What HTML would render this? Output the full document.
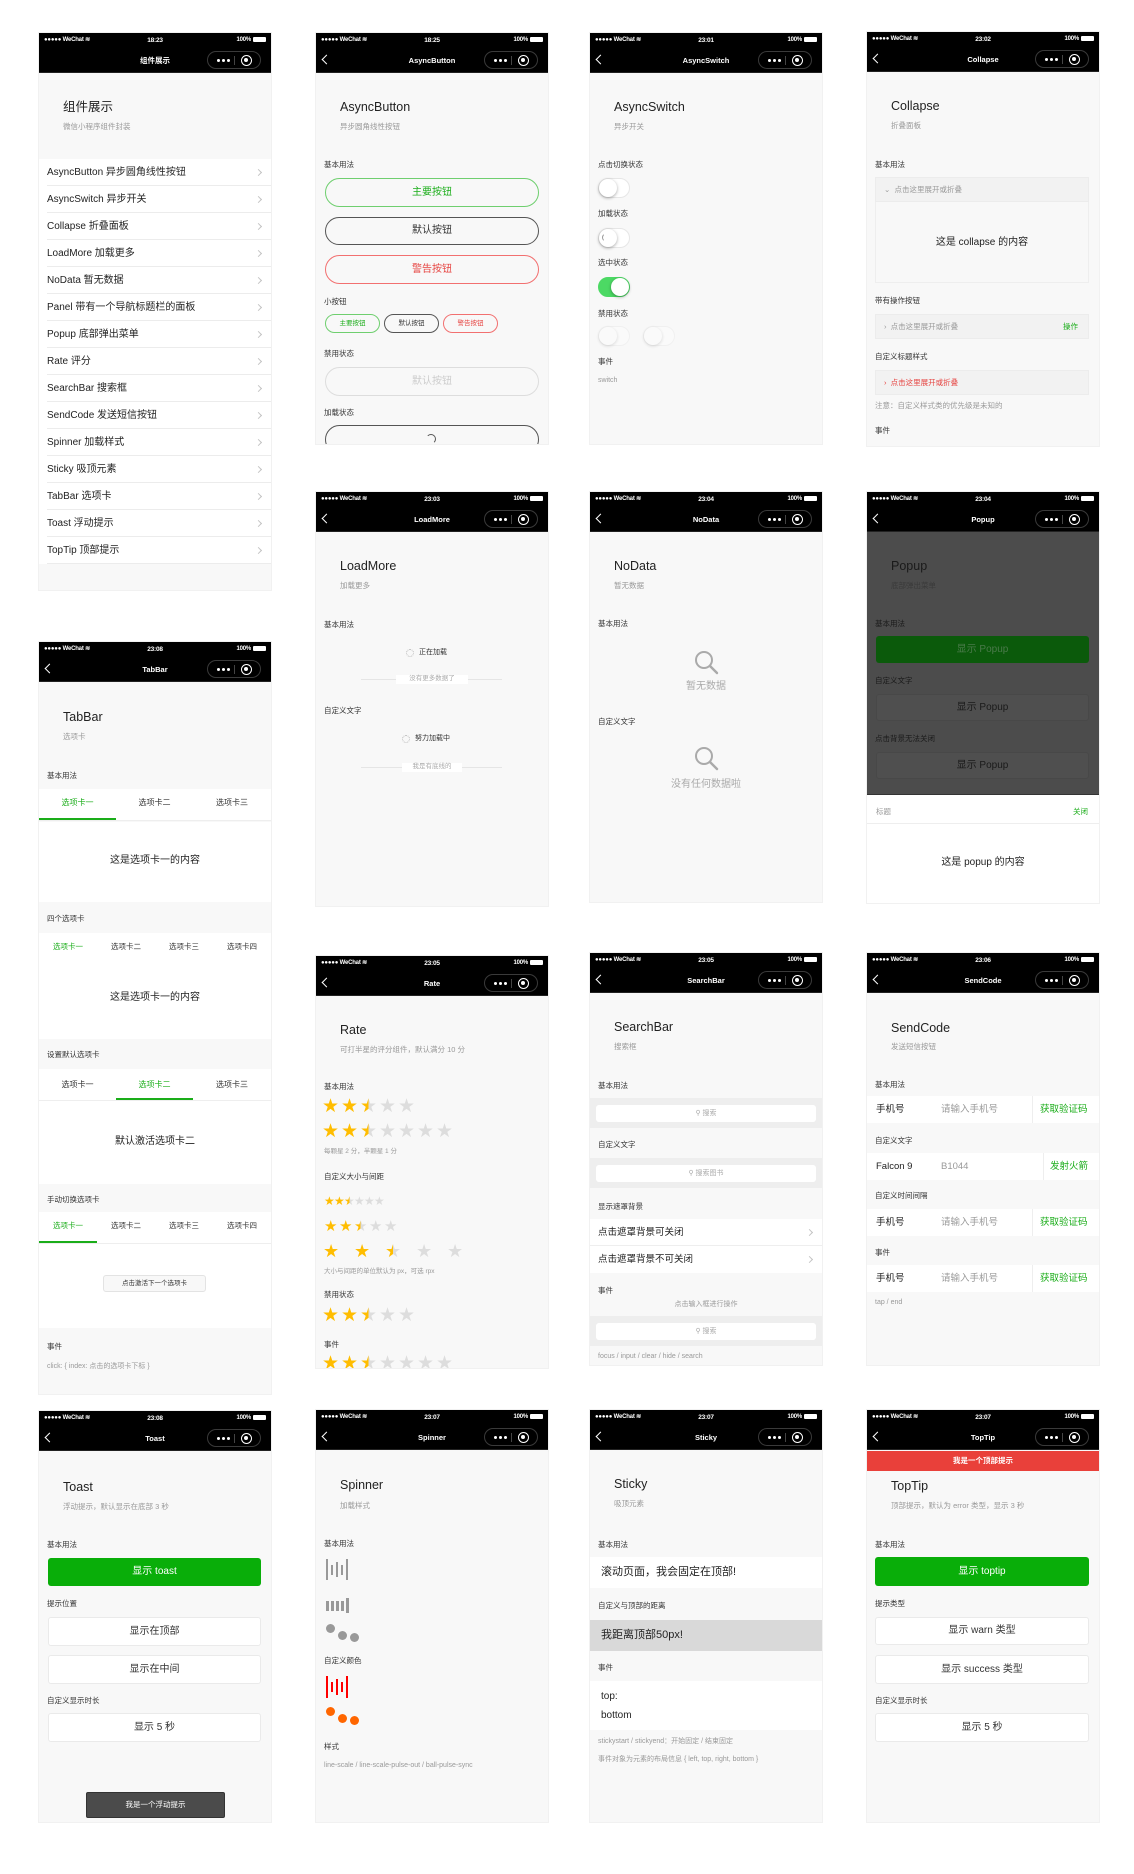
<!DOCTYPE html>
<html><head><meta charset="utf-8"><style>
*{margin:0;padding:0;box-sizing:border-box}
body{width:1134px;height:1874px;background:#fff;position:relative;overflow:hidden;font-family:"Liberation Sans","Noto Sans CJK SC",sans-serif;color:#222}
.p{position:absolute;width:232px;background:#f8f8f8;overflow:hidden;box-shadow:0 0 0 1px #f1f1f1}
.a{position:absolute;white-space:nowrap;line-height:1}
.hd{position:absolute;left:0;top:0;width:100%;height:40px;background:#000;color:#fff;border-bottom:1px solid #222}
.sb{position:absolute;top:4px;font:bold 6px/7px "Liberation Sans",sans-serif;letter-spacing:-.2px}
.sl{left:5px}.sc{left:0;right:0;text-align:center;font-size:6.5px}.sr{right:5px}
.bat{display:inline-block;width:13px;height:5px;background:#fff;border-radius:1px;vertical-align:-1px;margin-left:2px}
.bk{position:absolute;left:7px;top:23px;width:7px;height:7px;border-left:1.6px solid #fff;border-bottom:1.6px solid #fff;transform:rotate(45deg)}
.nt{position:absolute;top:23px;left:0;right:0;text-align:center;font:bold 7.5px/9px "Liberation Sans","Noto Sans CJK SC",sans-serif}
.cap{position:absolute;left:168px;top:18px;width:54px;height:18px;border:1px solid #3a3a3a;border-radius:10px}
.cap i{position:absolute;top:7px;width:3px;height:3px;border-radius:50%;background:#fff}
.cap .sp{position:absolute;left:26px;top:4px;width:1px;height:9px;background:#444}
.cap .rg{position:absolute;left:33px;top:3px;width:11px;height:11px;border:1.6px solid #fff;border-radius:50%}
.cap .rg:after{content:"";position:absolute;left:2px;top:2px;width:4px;height:4px;background:#fff;border-radius:50%}
.h{left:24px;top:68px;font-size:12.5px;color:#222}
.d{left:24px;top:90px;font-size:7.5px;color:#999}
.s{left:8px;font-size:7.5px;color:#333}
.li{position:absolute;left:0;width:232px;height:27px;background:#fff}
.li span{position:absolute;left:8px;top:8px;font-size:10px;line-height:11px;color:#222;white-space:nowrap}
.li:after{content:"";position:absolute;left:8px;right:0;bottom:0;height:1px;background:#ececec}
.chev{position:absolute;right:10px;top:11px;width:5px;height:5px;border-right:1px solid #c4c4c4;border-top:1px solid #c4c4c4;transform:rotate(45deg)}
.btn{position:absolute;border:1px solid #555;border-radius:15px;text-align:center;font-size:10px;background:transparent}
.sw{position:absolute;width:32px;height:20px;border-radius:10px;background:#fff;border:1px solid #e6e6e6}
.sw:after{content:"";position:absolute;left:0;top:0;width:18px;height:18px;border-radius:50%;background:#fff;box-shadow:0 1px 3px rgba(0,0,0,.35)}
.sw.on{background:#4cd964;border-color:#4cd964}.sw.on:after{left:12px}
.star{position:absolute;color:#ddd;line-height:1;font-family:"DejaVu Sans",sans-serif}
.f{color:#ffbd00}.hf{background:linear-gradient(90deg,#ffbd00 50%,#ddd 50%);-webkit-background-clip:text;background-clip:text;color:transparent}
.band{position:absolute;left:0;width:232px;height:30px;background:#eeeeee}
.inp{position:absolute;left:6px;right:6px;top:7px;height:17px;background:#fff;border-radius:3px;text-align:center;font-size:7px;line-height:17px;color:#aaa}
.wb{position:absolute;left:9px;width:213px;background:#fff;border:1px solid #eaeaea;border-radius:3px;text-align:center;font-size:10px;color:#333}
.row{position:absolute;left:0;width:232px;height:27px;background:#fff}
.row span{position:absolute;top:8px;font-size:9.5px;line-height:11px;white-space:nowrap}
</style></head><body>

<!-- ============ COL1: LIST ============ -->
<div class="p" style="left:39px;top:33px;height:557px">
<div class="hd"><span class="sb sl">●●●●● WeChat ≋</span><span class="sb sc">18:23</span><span class="sb sr">100%<i class="bat"></i></span><span class="nt">组件展示</span><div class="cap"><i style="left:9px"></i><i style="left:14px"></i><i style="left:19px"></i><b class="sp"></b><b class="rg"></b></div></div>
<div class="a h">组件展示</div><div class="a d">微信小程序组件封装</div>
<div class="li" style="top:126px"><span>AsyncButton 异步圆角线性按钮</span><b class="chev"></b></div>
<div class="li" style="top:153px"><span>AsyncSwitch 异步开关</span><b class="chev"></b></div>
<div class="li" style="top:180px"><span>Collapse 折叠面板</span><b class="chev"></b></div>
<div class="li" style="top:207px"><span>LoadMore 加载更多</span><b class="chev"></b></div>
<div class="li" style="top:234px"><span>NoData 暂无数据</span><b class="chev"></b></div>
<div class="li" style="top:261px"><span>Panel 带有一个导航标题栏的面板</span><b class="chev"></b></div>
<div class="li" style="top:288px"><span>Popup 底部弹出菜单</span><b class="chev"></b></div>
<div class="li" style="top:315px"><span>Rate 评分</span><b class="chev"></b></div>
<div class="li" style="top:342px"><span>SearchBar 搜索框</span><b class="chev"></b></div>
<div class="li" style="top:369px"><span>SendCode 发送短信按钮</span><b class="chev"></b></div>
<div class="li" style="top:396px"><span>Spinner 加载样式</span><b class="chev"></b></div>
<div class="li" style="top:423px"><span>Sticky 吸顶元素</span><b class="chev"></b></div>
<div class="li" style="top:450px"><span>TabBar 选项卡</span><b class="chev"></b></div>
<div class="li" style="top:477px"><span>Toast 浮动提示</span><b class="chev"></b></div>
<div class="li" style="top:504px"><span>TopTip 顶部提示</span><b class="chev"></b></div>
</div>

<!-- ============ COL1: TABBAR ============ -->
<div class="p" style="left:39px;top:642px;height:752px">
<div class="hd"><span class="sb sl">●●●●● WeChat ≋</span><span class="sb sc">23:08</span><span class="sb sr">100%<i class="bat"></i></span><b class="bk"></b><span class="nt">TabBar</span><div class="cap"><i style="left:9px"></i><i style="left:14px"></i><i style="left:19px"></i><b class="sp"></b><b class="rg"></b></div></div>
<div class="a h" style="top:69px">TabBar</div><div class="a d" style="top:91px">选项卡</div>
<div class="a s" style="top:130px">基本用法</div>
<div class="a" style="left:0;top:147px;width:232px;height:32px;background:#fff;border-bottom:1px solid #eee"></div>
<div class="a" style="left:0;top:176px;width:77px;height:2px;background:#1aad19"></div>
<div class="a" style="left:0;width:77px;top:157px;text-align:center;font-size:8px;color:#1aad19">选项卡一</div>
<div class="a" style="left:77px;width:77px;top:157px;text-align:center;font-size:8px;color:#333">选项卡二</div>
<div class="a" style="left:154px;width:78px;top:157px;text-align:center;font-size:8px;color:#333">选项卡三</div>
<div class="a" style="left:0;top:180px;width:232px;height:80px;background:#fff"></div>
<div class="a" style="left:0;width:232px;top:214px;text-align:center;font-size:10px;color:#222">这是选项卡一的内容</div>
<div class="a s" style="top:273px">四个选项卡</div>
<div class="a" style="left:0;top:291px;width:232px;height:106px;background:#fff"></div>
<div class="a" style="left:0;width:58px;top:301px;text-align:center;font-size:7.5px;color:#1aad19">选项卡一</div>
<div class="a" style="left:58px;width:58px;top:301px;text-align:center;font-size:7.5px;color:#333">选项卡二</div>
<div class="a" style="left:116px;width:58px;top:301px;text-align:center;font-size:7.5px;color:#333">选项卡三</div>
<div class="a" style="left:174px;width:58px;top:301px;text-align:center;font-size:7.5px;color:#333">选项卡四</div>
<div class="a" style="left:0;width:232px;top:351px;text-align:center;font-size:10px">这是选项卡一的内容</div>
<div class="a s" style="top:409px">设置默认选项卡</div>
<div class="a" style="left:0;top:427px;width:232px;height:115px;background:#fff"></div>
<div class="a" style="left:0;top:458px;width:232px;height:1px;background:#eee"></div>
<div class="a" style="left:77px;top:456px;width:77px;height:2px;background:#1aad19"></div>
<div class="a" style="left:0;width:77px;top:439px;text-align:center;font-size:8px;color:#333">选项卡一</div>
<div class="a" style="left:77px;width:77px;top:439px;text-align:center;font-size:8px;color:#1aad19">选项卡二</div>
<div class="a" style="left:154px;width:78px;top:439px;text-align:center;font-size:8px;color:#333">选项卡三</div>
<div class="a" style="left:0;width:232px;top:495px;text-align:center;font-size:10px">默认激活选项卡二</div>
<div class="a s" style="top:554px">手动切换选项卡</div>
<div class="a" style="left:0;top:570px;width:232px;height:116px;background:#fff"></div>
<div class="a" style="left:0;top:601px;width:232px;height:1px;background:#eee"></div>
<div class="a" style="left:0;top:599px;width:58px;height:2px;background:#1aad19"></div>
<div class="a" style="left:0;width:58px;top:580px;text-align:center;font-size:7.5px;color:#1aad19">选项卡一</div>
<div class="a" style="left:58px;width:58px;top:580px;text-align:center;font-size:7.5px;color:#333">选项卡二</div>
<div class="a" style="left:116px;width:58px;top:580px;text-align:center;font-size:7.5px;color:#333">选项卡三</div>
<div class="a" style="left:174px;width:58px;top:580px;text-align:center;font-size:7.5px;color:#333">选项卡四</div>
<div class="a" style="left:64px;top:633px;width:103px;height:17px;background:#f8f8f8;border:1px solid #e3e3e3;border-radius:3px;text-align:center;font-size:6.5px;line-height:15px;color:#333">点击激活下一个选项卡</div>
<div class="a s" style="top:701px">事件</div>
<div class="a s" style="top:721px;color:#999;font-size:7px">click: { index: 点击的选项卡下标 }</div>
</div>

<!-- ============ COL2: ASYNCBUTTON ============ -->
<div class="p" style="left:316px;top:33px;height:411px">
<div class="hd"><span class="sb sl">●●●●● WeChat ≋</span><span class="sb sc">18:25</span><span class="sb sr">100%<i class="bat"></i></span><b class="bk"></b><span class="nt">AsyncButton</span><div class="cap"><i style="left:9px"></i><i style="left:14px"></i><i style="left:19px"></i><b class="sp"></b><b class="rg"></b></div></div>
<div class="a h">AsyncButton</div><div class="a d">异步圆角线性按钮</div>
<div class="a s" style="top:128px">基本用法</div>
<div class="btn" style="left:9px;top:145px;width:214px;height:29px;line-height:27px;border-color:#6fcf6f;color:#1aad19">主要按钮</div>
<div class="btn" style="left:9px;top:184px;width:214px;height:28px;line-height:26px;color:#333">默认按钮</div>
<div class="btn" style="left:9px;top:222px;width:214px;height:29px;line-height:27px;border-color:#f27070;color:#e64340">警告按钮</div>
<div class="a s" style="top:265px">小按钮</div>
<div class="btn" style="left:9px;top:281px;width:55px;height:19px;line-height:17px;font-size:6.5px;border-color:#6fcf6f;color:#1aad19">主要按钮</div>
<div class="btn" style="left:68px;top:281px;width:55px;height:19px;line-height:17px;font-size:6.5px;color:#333">默认按钮</div>
<div class="btn" style="left:127px;top:281px;width:55px;height:19px;line-height:17px;font-size:6.5px;border-color:#f27070;color:#e64340">警告按钮</div>
<div class="a s" style="top:317px">禁用状态</div>
<div class="btn" style="left:9px;top:334px;width:214px;height:29px;line-height:27px;border-color:#ddd;color:#ccc">默认按钮</div>
<div class="a s" style="top:376px">加载状态</div>
<div class="btn" style="left:9px;top:392px;width:214px;height:29px"></div>
<div class="a" style="left:110px;top:401px;width:10px;height:10px;border-radius:50%;border:1px solid transparent;border-top-color:#555;border-right-color:#555"></div>
</div>

<!-- ============ COL2: LOADMORE ============ -->
<div class="p" style="left:316px;top:492px;height:414px">
<div class="hd"><span class="sb sl">●●●●● WeChat ≋</span><span class="sb sc">23:03</span><span class="sb sr">100%<i class="bat"></i></span><b class="bk"></b><span class="nt">LoadMore</span><div class="cap"><i style="left:9px"></i><i style="left:14px"></i><i style="left:19px"></i><b class="sp"></b><b class="rg"></b></div></div>
<div class="a h">LoadMore</div><div class="a d">加载更多</div>
<div class="a s" style="top:129px">基本用法</div>
<div class="a" style="left:90px;top:157px;width:8px;height:8px;border-radius:50%;border:1.5px dotted #bbb"></div>
<div class="a" style="left:103px;top:157px;font-size:7px;color:#333">正在加载</div>
<div class="a" style="left:45px;top:187px;width:141px;height:1px;background:#e5e5e5"></div>
<div class="a" style="left:80px;top:183px;width:72px;background:#fff;text-align:center;font-size:6.5px;color:#aaa;padding:1px 0">没有更多数据了</div>
<div class="a s" style="top:215px">自定义文字</div>
<div class="a" style="left:86px;top:243px;width:8px;height:8px;border-radius:50%;border:1.5px dotted #bbb"></div>
<div class="a" style="left:99px;top:243px;font-size:7px;color:#333">努力加载中</div>
<div class="a" style="left:45px;top:275px;width:141px;height:1px;background:#e5e5e5"></div>
<div class="a" style="left:86px;top:271px;width:60px;background:#fff;text-align:center;font-size:6.5px;color:#aaa;padding:1px 0">我是有底线的</div>
</div>

<!-- ============ COL2: RATE ============ -->
<div class="p" style="left:316px;top:956px;height:412px">
<div class="hd"><span class="sb sl">●●●●● WeChat ≋</span><span class="sb sc">23:05</span><span class="sb sr">100%<i class="bat"></i></span><b class="bk"></b><span class="nt">Rate</span><div class="cap"><i style="left:9px"></i><i style="left:14px"></i><i style="left:19px"></i><b class="sp"></b><b class="rg"></b></div></div>
<div class="a h">Rate</div><div class="a d">可打半星的评分组件，默认满分 10 分</div>
<div class="a s" style="top:127px">基本用法</div>
<div class="star f" style="left:6px;top:141px;font-size:19px">★</div><div class="star f" style="left:25px;top:141px;font-size:19px">★</div><div class="star hf" style="left:44px;top:141px;font-size:19px">★</div><div class="star" style="left:63px;top:141px;font-size:19px">★</div><div class="star" style="left:82px;top:141px;font-size:19px">★</div>
<div class="star f" style="left:6px;top:166px;font-size:19px">★</div><div class="star f" style="left:25px;top:166px;font-size:19px">★</div><div class="star hf" style="left:44px;top:166px;font-size:19px">★</div><div class="star" style="left:63px;top:166px;font-size:19px">★</div><div class="star" style="left:82px;top:166px;font-size:19px">★</div><div class="star" style="left:101px;top:166px;font-size:19px">★</div><div class="star" style="left:120px;top:166px;font-size:19px">★</div>
<div class="a s" style="top:193px;font-size:6.5px;color:#999">每颗星 2 分，半颗星 1 分</div>
<div class="a s" style="top:217px">自定义大小与间距</div>
<div class="star f" style="left:8px;top:239px;font-size:12px">★</div><div class="star f" style="left:18px;top:239px;font-size:12px">★</div><div class="star hf" style="left:28px;top:239px;font-size:12px">★</div><div class="star" style="left:38px;top:239px;font-size:12px">★</div><div class="star" style="left:48px;top:239px;font-size:12px">★</div><div class="star" style="left:58px;top:239px;font-size:12px">★</div>
<div class="star f" style="left:8px;top:263px;font-size:15px">★</div><div class="star f" style="left:23px;top:263px;font-size:15px">★</div><div class="star hf" style="left:38px;top:263px;font-size:15px">★</div><div class="star" style="left:53px;top:263px;font-size:15px">★</div><div class="star" style="left:68px;top:263px;font-size:15px">★</div>
<div class="star f" style="left:7px;top:287px;font-size:18px">★</div><div class="star f" style="left:38px;top:287px;font-size:18px">★</div><div class="star hf" style="left:69px;top:287px;font-size:18px">★</div><div class="star" style="left:100px;top:287px;font-size:18px">★</div><div class="star" style="left:131px;top:287px;font-size:18px">★</div>
<div class="a s" style="top:313px;font-size:6.5px;color:#999">大小与间距的单位默认为 px，可选 rpx</div>
<div class="a s" style="top:335px">禁用状态</div>
<div class="star f" style="left:6px;top:350px;font-size:19px">★</div><div class="star f" style="left:25px;top:350px;font-size:19px">★</div><div class="star hf" style="left:44px;top:350px;font-size:19px">★</div><div class="star" style="left:63px;top:350px;font-size:19px">★</div><div class="star" style="left:82px;top:350px;font-size:19px">★</div>
<div class="a s" style="top:385px">事件</div>
<div class="star f" style="left:6px;top:398px;font-size:19px">★</div><div class="star f" style="left:25px;top:398px;font-size:19px">★</div><div class="star hf" style="left:44px;top:398px;font-size:19px">★</div><div class="star" style="left:63px;top:398px;font-size:19px">★</div><div class="star" style="left:82px;top:398px;font-size:19px">★</div><div class="star" style="left:101px;top:398px;font-size:19px">★</div><div class="star" style="left:120px;top:398px;font-size:19px">★</div>
</div>

<!-- ============ COL2: SPINNER ============ -->
<div class="p" style="left:316px;top:1410px;height:412px">
<div class="hd"><span class="sb sl">●●●●● WeChat ≋</span><span class="sb sc">23:07</span><span class="sb sr">100%<i class="bat"></i></span><b class="bk"></b><span class="nt">Spinner</span><div class="cap"><i style="left:9px"></i><i style="left:14px"></i><i style="left:19px"></i><b class="sp"></b><b class="rg"></b></div></div>
<div class="a h" style="top:69px">Spinner</div><div class="a d" style="top:92px">加载样式</div>
<div class="a s" style="top:130px">基本用法</div>
<div class="a" style="left:10px;top:149px;width:2px;height:21px;background:#999"></div><div class="a" style="left:15px;top:155px;width:2px;height:10px;background:#999"></div><div class="a" style="left:20px;top:152px;width:2px;height:15px;background:#999"></div><div class="a" style="left:25px;top:155px;width:2px;height:10px;background:#999"></div><div class="a" style="left:30px;top:149px;width:2px;height:21px;background:#999"></div>
<div class="a" style="left:10px;top:191px;width:3px;height:10px;background:#999"></div><div class="a" style="left:15px;top:191px;width:3px;height:10px;background:#999"></div><div class="a" style="left:20px;top:191px;width:3px;height:10px;background:#999"></div><div class="a" style="left:25px;top:191px;width:3px;height:10px;background:#999"></div><div class="a" style="left:30px;top:188px;width:3px;height:15px;background:#999"></div>
<div class="a" style="left:10px;top:214px;width:9px;height:9px;border-radius:50%;background:#999"></div><div class="a" style="left:22px;top:221px;width:9px;height:9px;border-radius:50%;background:#999"></div><div class="a" style="left:34px;top:223px;width:9px;height:9px;border-radius:50%;background:#999"></div>
<div class="a s" style="top:247px">自定义颜色</div>
<div class="a" style="left:10px;top:266px;width:2px;height:22px;background:#f00"></div><div class="a" style="left:15px;top:272px;width:2px;height:10px;background:#f00"></div><div class="a" style="left:20px;top:269px;width:2px;height:16px;background:#f00"></div><div class="a" style="left:25px;top:272px;width:2px;height:10px;background:#f00"></div><div class="a" style="left:30px;top:266px;width:2px;height:22px;background:#f00"></div>
<div class="a" style="left:10px;top:297px;width:9px;height:9px;border-radius:50%;background:#f60"></div><div class="a" style="left:22px;top:304px;width:9px;height:9px;border-radius:50%;background:#f60"></div><div class="a" style="left:34px;top:306px;width:9px;height:9px;border-radius:50%;background:#f60"></div>
<div class="a s" style="top:333px">样式</div>
<div class="a s" style="top:352px;color:#999;font-size:7px">line-scale / line-scale-pulse-out / ball-pulse-sync</div>
</div>

<!-- ============ COL3: ASYNCSWITCH ============ -->
<div class="p" style="left:590px;top:33px;height:411px">
<div class="hd"><span class="sb sl">●●●●● WeChat ≋</span><span class="sb sc">23:01</span><span class="sb sr">100%<i class="bat"></i></span><b class="bk"></b><span class="nt">AsyncSwitch</span><div class="cap"><i style="left:9px"></i><i style="left:14px"></i><i style="left:19px"></i><b class="sp"></b><b class="rg"></b></div></div>
<div class="a h">AsyncSwitch</div><div class="a d">异步开关</div>
<div class="a s" style="top:128px">点击切换状态</div>
<div class="sw" style="left:8px;top:145px"></div>
<div class="a s" style="top:177px">加载状态</div>
<div class="sw" style="left:8px;top:195px"></div><div class="a" style="left:12px;top:200px;width:9px;height:9px;border-radius:50%;border:1px solid transparent;border-left-color:#999"></div>
<div class="a s" style="top:226px">选中状态</div>
<div class="sw on" style="left:8px;top:244px"></div>
<div class="a s" style="top:277px">禁用状态</div>
<div class="sw" style="left:8px;top:293px;opacity:.4"></div>
<div class="sw" style="left:53px;top:293px;opacity:.4"></div>
<div class="a s" style="top:325px">事件</div>
<div class="a s" style="top:344px;color:#999;font-size:7px">switch</div>
</div>

<!-- ============ COL3: NODATA ============ -->
<div class="p" style="left:590px;top:492px;height:410px">
<div class="hd"><span class="sb sl">●●●●● WeChat ≋</span><span class="sb sc">23:04</span><span class="sb sr">100%<i class="bat"></i></span><b class="bk"></b><span class="nt">NoData</span><div class="cap"><i style="left:9px"></i><i style="left:14px"></i><i style="left:19px"></i><b class="sp"></b><b class="rg"></b></div></div>
<div class="a h">NoData</div><div class="a d">暂无数据</div>
<div class="a s" style="top:128px">基本用法</div>
<svg class="a" style="left:104px;top:158px" width="25" height="25" viewBox="0 0 25 25"><circle cx="10" cy="10" r="8" fill="none" stroke="#aaa" stroke-width="2"/><path d="M16 16 L23 23" stroke="#aaa" stroke-width="2.4" stroke-linecap="round"/></svg>
<div class="a" style="left:0;width:232px;top:190px;text-align:center;font-size:10px;color:#aaa">暂无数据</div>
<div class="a s" style="top:226px">自定义文字</div>
<svg class="a" style="left:104px;top:254px" width="25" height="25" viewBox="0 0 25 25"><circle cx="10" cy="10" r="8" fill="none" stroke="#aaa" stroke-width="2"/><path d="M16 16 L23 23" stroke="#aaa" stroke-width="2.4" stroke-linecap="round"/></svg>
<div class="a" style="left:0;width:232px;top:288px;text-align:center;font-size:10px;color:#aaa">没有任何数据啦</div>
</div>

<!-- ============ COL3: SEARCHBAR ============ -->
<div class="p" style="left:590px;top:953px;height:412px">
<div class="hd"><span class="sb sl">●●●●● WeChat ≋</span><span class="sb sc">23:05</span><span class="sb sr">100%<i class="bat"></i></span><b class="bk"></b><span class="nt">SearchBar</span><div class="cap"><i style="left:9px"></i><i style="left:14px"></i><i style="left:19px"></i><b class="sp"></b><b class="rg"></b></div></div>
<div class="a h">SearchBar</div><div class="a d">搜索框</div>
<div class="a s" style="top:129px">基本用法</div>
<div class="band" style="top:145px"><div class="inp">⚲ 搜索</div></div>
<div class="a s" style="top:188px">自定义文字</div>
<div class="band" style="top:205px"><div class="inp">⚲ 搜索图书</div></div>
<div class="a s" style="top:250px">显示遮罩背景</div>
<div class="row" style="top:266px;border-bottom:1px solid #eee"><span style="left:8px;color:#222">点击遮罩背景可关闭</span><b class="chev"></b></div>
<div class="row" style="top:293px"><span style="left:8px;color:#222">点击遮罩背景不可关闭</span><b class="chev"></b></div>
<div class="a s" style="top:334px">事件</div>
<div class="a" style="left:0;width:232px;top:348px;text-align:center;font-size:7px;color:#999">点击输入框进行操作</div>
<div class="band" style="top:363px"><div class="inp">⚲ 搜索</div></div>
<div class="a s" style="top:400px;color:#999;font-size:7px">focus / input / clear / hide / search</div>
</div>

<!-- ============ COL3: STICKY ============ -->
<div class="p" style="left:590px;top:1410px;height:412px">
<div class="hd"><span class="sb sl">●●●●● WeChat ≋</span><span class="sb sc">23:07</span><span class="sb sr">100%<i class="bat"></i></span><b class="bk"></b><span class="nt">Sticky</span><div class="cap"><i style="left:9px"></i><i style="left:14px"></i><i style="left:19px"></i><b class="sp"></b><b class="rg"></b></div></div>
<div class="a h">Sticky</div><div class="a d">吸顶元素</div>
<div class="a s" style="top:131px">基本用法</div>
<div class="a" style="left:0;top:147px;width:232px;height:31px;background:#fff"></div>
<div class="a" style="left:11px;top:157px;font-size:11px">滚动页面，我会固定在顶部!</div>
<div class="a s" style="top:192px">自定义与顶部的距离</div>
<div class="a" style="left:0;top:210px;width:232px;height:31px;background:#d9d9d9"></div>
<div class="a" style="left:11px;top:220px;font-size:11px">我距离顶部50px!</div>
<div class="a s" style="top:254px">事件</div>
<div class="a" style="left:0;top:271px;width:232px;height:49px;background:#fff"></div>
<div class="a" style="left:11px;top:282px;font-size:10px">top:</div>
<div class="a" style="left:11px;top:301px;font-size:10px">bottom</div>
<div class="a s" style="top:328px;color:#999;font-size:7px">stickystart / stickyend：开始固定 / 结束固定</div>
<div class="a s" style="top:346px;color:#999;font-size:7px">事件对象为元素的布局信息 { left, top, right, bottom }</div>
</div>

<!-- ============ COL4: COLLAPSE ============ -->
<div class="p" style="left:867px;top:32px;height:414px">
<div class="hd"><span class="sb sl">●●●●● WeChat ≋</span><span class="sb sc">23:02</span><span class="sb sr">100%<i class="bat"></i></span><b class="bk"></b><span class="nt">Collapse</span><div class="cap"><i style="left:9px"></i><i style="left:14px"></i><i style="left:19px"></i><b class="sp"></b><b class="rg"></b></div></div>
<div class="a h">Collapse</div><div class="a d">折叠面板</div>
<div class="a s" style="top:129px">基本用法</div>
<div class="a" style="left:8px;top:145px;width:214px;height:25px;background:#f2f2f2;border:1px solid #ececec"></div>
<div class="a" style="left:17px;top:154px;font-size:7.5px;color:#999">⌄ &nbsp;点击这里展开或折叠</div>
<div class="a" style="left:8px;top:170px;width:214px;height:81px;border:1px solid #eee;border-top:0"></div>
<div class="a" style="left:8px;width:214px;top:206px;text-align:center;font-size:10px">这是 collapse 的内容</div>
<div class="a s" style="top:265px">带有操作按钮</div>
<div class="a" style="left:8px;top:282px;width:214px;height:25px;background:#f2f2f2;border:1px solid #ececec"></div>
<div class="a" style="left:17px;top:291px;font-size:7.5px;color:#999">› &nbsp;点击这里展开或折叠</div>
<div class="a" style="left:196px;top:291px;font-size:7.5px;color:#1aad19">操作</div>
<div class="a s" style="top:321px">自定义标题样式</div>
<div class="a" style="left:8px;top:338px;width:214px;height:25px;background:#f2f2f2;border:1px solid #ececec"></div>
<div class="a" style="left:17px;top:347px;font-size:7.5px;color:#e64340">› &nbsp;点击这里展开或折叠</div>
<div class="a s" style="top:370px;color:#999">注意：自定义样式类的优先级是未知的</div>
<div class="a s" style="top:395px">事件</div>
</div>

<!-- ============ COL4: POPUP ============ -->
<div class="p" style="left:867px;top:492px;height:411px;background:#fff">
<div class="hd"><span class="sb sl">●●●●● WeChat ≋</span><span class="sb sc">23:04</span><span class="sb sr">100%<i class="bat"></i></span><b class="bk"></b><span class="nt">Popup</span><div class="cap"><i style="left:9px"></i><i style="left:14px"></i><i style="left:19px"></i><b class="sp"></b><b class="rg"></b></div></div>
<div class="a" style="left:0;top:40px;width:232px;height:262px;background:#4c4c4c"></div>
<div class="a h" style="color:#1a1a1a">Popup</div><div class="a d" style="color:#3a3a3a">底部弹出菜单</div>
<div class="a s" style="top:128px;color:#1a1a1a">基本用法</div>
<div class="a" style="left:9px;top:144px;width:213px;height:27px;background:#0b5a0b;border-radius:3px;text-align:center;font-size:10px;line-height:27px;color:#4a7a4a">显示 Popup</div>
<div class="a s" style="top:185px;color:#1a1a1a">自定义文字</div>
<div class="a" style="left:9px;top:202px;width:213px;height:27px;background:#4f4f4f;border:1px solid #484848;border-radius:3px;text-align:center;font-size:10px;line-height:25px;color:#1a1a1a">显示 Popup</div>
<div class="a s" style="top:243px;color:#1a1a1a">点击背景无法关闭</div>
<div class="a" style="left:9px;top:260px;width:213px;height:27px;background:#4f4f4f;border:1px solid #484848;border-radius:3px;text-align:center;font-size:10px;line-height:25px;color:#1a1a1a">显示 Popup</div>
<div class="a" style="left:0;top:302px;width:232px;height:1px;background:#333"></div>
<div class="a" style="left:9px;top:316px;font-size:7.5px;color:#999">标题</div>
<div class="a" style="left:206px;top:316px;font-size:7.5px;color:#1aad19">关闭</div>
<div class="a" style="left:0;top:331px;width:232px;height:1px;background:#eee"></div>
<div class="a" style="left:0;width:232px;top:366px;text-align:center;font-size:10px">这是 popup 的内容</div>
</div>

<!-- ============ COL4: SENDCODE ============ -->
<div class="p" style="left:867px;top:953px;height:412px">
<div class="hd"><span class="sb sl">●●●●● WeChat ≋</span><span class="sb sc">23:06</span><span class="sb sr">100%<i class="bat"></i></span><b class="bk"></b><span class="nt">SendCode</span><div class="cap"><i style="left:9px"></i><i style="left:14px"></i><i style="left:19px"></i><b class="sp"></b><b class="rg"></b></div></div>
<div class="a h" style="top:69px">SendCode</div><div class="a d">发送短信按钮</div>
<div class="a s" style="top:128px">基本用法</div>
<div class="row" style="top:143px"><span style="left:9px">手机号</span><span style="left:74px;color:#999">请输入手机号</span><b class="a" style="left:165px;top:0;width:1px;height:27px;background:#eee"></b><span style="left:173px;color:#1aad19">获取验证码</span></div>
<div class="a s" style="top:184px">自定义文字</div>
<div class="row" style="top:200px"><span style="left:9px">Falcon 9</span><span style="left:74px;color:#999">B1044</span><b class="a" style="left:176px;top:0;width:1px;height:27px;background:#eee"></b><span style="left:183px;color:#1aad19">发射火箭</span></div>
<div class="a s" style="top:239px">自定义时间间隔</div>
<div class="row" style="top:256px"><span style="left:9px">手机号</span><span style="left:74px;color:#999">请输入手机号</span><b class="a" style="left:165px;top:0;width:1px;height:27px;background:#eee"></b><span style="left:173px;color:#1aad19">获取验证码</span></div>
<div class="a s" style="top:296px">事件</div>
<div class="row" style="top:312px"><span style="left:9px">手机号</span><span style="left:74px;color:#999">请输入手机号</span><b class="a" style="left:165px;top:0;width:1px;height:27px;background:#eee"></b><span style="left:173px;color:#1aad19">获取验证码</span></div>
<div class="a s" style="top:346px;color:#999;font-size:7px">tap / end</div>
</div>

<!-- ============ COL1: TOAST ============ -->
<div class="p" style="left:39px;top:1411px;height:411px">
<div class="hd"><span class="sb sl">●●●●● WeChat ≋</span><span class="sb sc">23:08</span><span class="sb sr">100%<i class="bat"></i></span><b class="bk"></b><span class="nt">Toast</span><div class="cap"><i style="left:9px"></i><i style="left:14px"></i><i style="left:19px"></i><b class="sp"></b><b class="rg"></b></div></div>
<div class="a h" style="top:70px">Toast</div><div class="a d" style="top:92px">浮动提示，默认显示在底部 3 秒</div>
<div class="a s" style="top:130px">基本用法</div>
<div class="a" style="left:9px;top:147px;width:213px;height:28px;background:#09ae09;border-radius:3px;text-align:center;font-size:10px;line-height:28px;color:#fff">显示 toast</div>
<div class="a s" style="top:189px">提示位置</div>
<div class="wb" style="top:206px;height:29px;line-height:27px">显示在顶部</div>
<div class="wb" style="top:244px;height:29px;line-height:27px">显示在中间</div>
<div class="a s" style="top:286px">自定义显示时长</div>
<div class="wb" style="top:302px;height:29px;line-height:27px">显示 5 秒</div>
<div class="a" style="left:47px;top:381px;width:139px;height:26px;background:#4b4b4b;border:1px solid #333;border-radius:2px;text-align:center;font-size:7.5px;line-height:24px;color:#fff">我是一个浮动提示</div>
</div>

<!-- ============ COL4: TOPTIP ============ -->
<div class="p" style="left:867px;top:1410px;height:412px">
<div class="hd"><span class="sb sl">●●●●● WeChat ≋</span><span class="sb sc">23:07</span><span class="sb sr">100%<i class="bat"></i></span><b class="bk"></b><span class="nt">TopTip</span><div class="cap"><i style="left:9px"></i><i style="left:14px"></i><i style="left:19px"></i><b class="sp"></b><b class="rg"></b></div></div>
<div class="a" style="left:0;top:41px;width:232px;height:20px;background:#e9403a;text-align:center;font-size:7.5px;line-height:20px;color:#fff;font-weight:bold">我是一个顶部提示</div>
<div class="a h" style="top:70px">TopTip</div><div class="a d" style="top:92px">顶部提示，默认为 error 类型，显示 3 秒</div>
<div class="a s" style="top:131px">基本用法</div>
<div class="a" style="left:8px;top:147px;width:214px;height:29px;background:#09ae09;border-radius:3px;text-align:center;font-size:10px;line-height:29px;color:#fff">显示 toptip</div>
<div class="a s" style="top:190px">提示类型</div>
<div class="wb" style="left:8px;width:214px;top:207px;height:28px;line-height:26px">显示 warn 类型</div>
<div class="wb" style="left:8px;width:214px;top:245px;height:29px;line-height:27px">显示 success 类型</div>
<div class="a s" style="top:287px">自定义显示时长</div>
<div class="wb" style="left:8px;width:214px;top:303px;height:29px;line-height:27px">显示 5 秒</div>
</div>

</body></html>
